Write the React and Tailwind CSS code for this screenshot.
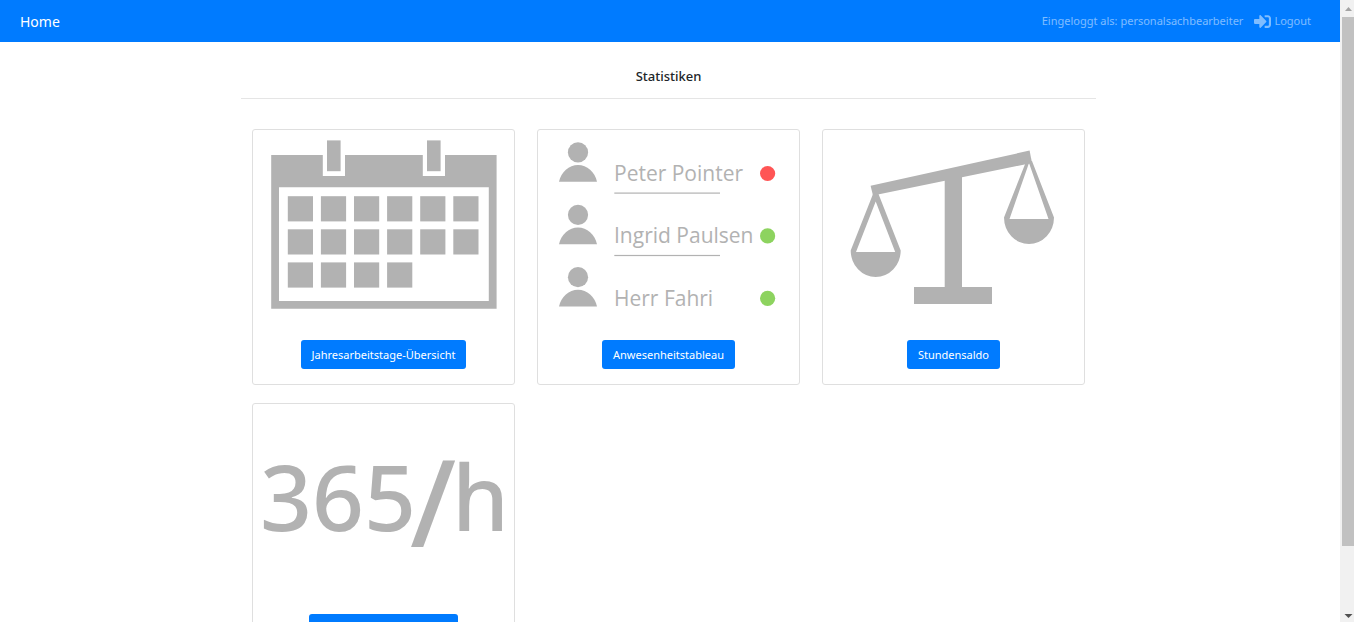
const GRAY = "#b2b2b2";

function SignInIcon() {
  return (
    <svg viewBox="0 0 512 512" className="size-[17px]" fill="currentColor" aria-hidden="true">
      <path d="M416 448h-84c-6.6 0-12-5.4-12-12v-40c0-6.6 5.4-12 12-12h84c17.7 0 32-14.3 32-32V160c0-17.7-14.3-32-32-32h-84c-6.6 0-12-5.4-12-12V76c0-6.6 5.4-12 12-12h84c53 0 96 43 96 96v192c0 53-43 96-96 96zm-47-209L201 71c-15-15-41-4.5-41 17v96H24c-13.3 0-24 10.7-24 24v96c0 13.3 10.7 24 24 24h136v96c0 21.5 26 32 41 17l168-168c9.3-9.4 9.3-24.6 0-34z" />
    </svg>
  );
}

function CalendarArt() {
  const cells = [6, 6, 4].flatMap((count, row) =>
    Array.from({ length: count }, (_, col) => ({ x: 34.8 + col * 33.1, y: 66.2 + row * 33.1 }))
  );
  return (
    <svg viewBox="0 0 261 200" className="h-[200px] w-full" aria-hidden="true">
      <path
        fill={GRAY}
        fillRule="evenodd"
        d="M18.2 25H69.8V46H92V25H169.8V46H192V25H243.6V178.8H18.2ZM26 57.2V171H235.8V57.2Z"
      />
      <rect x="74" y="10.4" width="13.6" height="30.8" fill={GRAY} />
      <rect x="174" y="10.4" width="13.6" height="30.8" fill={GRAY} />
      {cells.map((c) => (
        <rect key={`${c.x}-${c.y}`} x={c.x} y={c.y} width="25.2" height="25.2" fill={GRAY} />
      ))}
    </svg>
  );
}

const people = [
  { name: "Peter Pointer", dot: "#ff5555", y: 0 },
  { name: "Ingrid Paulsen", dot: "#8dd35f", y: 62.4 },
  { name: "Herr Fahri", dot: "#8dd35f", y: 124.8 },
];

function PresenceArt() {
  return (
    <svg viewBox="0 0 261 200" className="h-[200px] w-full">
      {people.map((p, i) => (
        <g key={p.name} transform={`translate(0 ${p.y})`}>
          <circle cx="40" cy="22.4" r="10.1" fill={GRAY} />
          <path d="M21 51.8C23 42 31 35 40 35S57 42 59 51.8Z" fill={GRAY} />
          <text x="76" y="51" fill={GRAY} className="font-['Open_Sans',sans-serif] text-[21px]">
            {p.name}
          </text>
          {i < 2 && <rect x="76.3" y="62.5" width="105.7" height="1.2" fill={GRAY} />}
          <circle cx="229.6" cy="43.5" r="7.6" fill={p.dot} />
        </g>
      ))}
    </svg>
  );
}

function ScaleArt() {
  return (
    <svg viewBox="0 0 261 200" className="h-[200px] w-full" aria-hidden="true">
      <g fill={GRAY}>
        <path d="M47.6 55.7L206.6 20.6L209 33L50 65.5Z" />
        <path d="M121.7 45H139V157H169V174H91V157H121.7Z" />
        <path fillRule="evenodd" d="M50 64H55.5L77.7 120.5A25 26.5 0 0 1 27.7 120.5ZM52.7 71.5L33 122H72.2Z" />
        <path fillRule="evenodd" d="M203.3 31H209L231 87.5A25 26.5 0 0 1 181 87.5ZM206 33L186.5 89H225.5Z" />
      </g>
    </svg>
  );
}

function HoursArt() {
  return (
    <svg viewBox="0 0 261 200" className="h-[200px] w-full">
      <text fill={GRAY} className="font-['Noto_Sans',sans-serif] text-[91px] font-medium">
        <tspan x="7" y="127">
          365
        </tspan>
        <tspan x="157" y="143" className="text-[120px]">
          /
        </tspan>
        <tspan x="199" y="127">
          h
        </tspan>
      </text>
    </svg>
  );
}

const cards = [
  { label: "Jahresarbeitstage-Übersicht", Art: CalendarArt },
  { label: "Anwesenheitstableau", Art: PresenceArt },
  { label: "Stundensaldo", Art: ScaleArt },
  { label: "Jahresstunden-Übersicht", Art: HoursArt },
];

function Card({ label, Art }) {
  return (
    <article className="flex flex-col items-center gap-[10px] rounded-[3px] border border-[#dfdfdf] bg-white pb-[15px]">
      <Art />
      <button type="button" className="h-[29px] rounded-[3px] bg-[#007bff] px-[11px] pt-[2px] text-[11px] text-white">
        {label}
      </button>
    </article>
  );
}

function ScrollTrack() {
  return (
    <div className="flex w-[14px] shrink-0 flex-col items-center bg-[#f1f1f1]" aria-hidden="true">
      <svg viewBox="0 0 14 17" className="h-[17px] w-[14px] shrink-0">
        <path d="M5 11L8.5 7L12 11Z" fill="#a3a3a3" />
      </svg>
      <div className="flex w-full flex-1 flex-col pl-[2px]">
        <div className="h-[90%] bg-[#c1c1c1]" />
      </div>
      <svg viewBox="0 0 14 17" className="h-[17px] w-[14px] shrink-0">
        <path d="M4.5 9L8.5 13L12.5 9Z" fill="#505050" />
      </svg>
    </div>
  );
}

export default function App() {
  return (
    <div className="flex h-screen bg-white font-['Noto_Sans','Open_Sans',sans-serif] text-[#212529]">
      <div className="min-w-0 flex-1 overflow-y-auto [scrollbar-width:none]">
        <nav className="flex h-[42px] items-center justify-between bg-[#007bff] pr-[29px] pl-5">
          <a href="#home" className="text-[14px] text-white">
            Home
          </a>
          <div className="flex items-center gap-[11px] text-[11px] text-white/50">
            <span>Eingeloggt als: personalsachbearbeiter</span>
            <a href="#logout" className="flex items-center gap-[3px]">
              <SignInIcon />
              Logout
            </a>
          </div>
        </nav>
        <div className="pr-[3px]">
          <main className="mx-auto max-w-[855px] pt-6 pb-5">
            <h1 className="border-b border-[#e5e5e5] pb-3 text-center text-[13px] leading-5 font-medium">
              Statistiken
            </h1>
            <div className="mt-[30px] grid grid-cols-3 gap-x-[22px] gap-y-[18px] px-[11px]">
              {cards.map((c) => (
                <Card key={c.label} {...c} />
              ))}
            </div>
          </main>
        </div>
      </div>
      <ScrollTrack />
    </div>
  );
}
